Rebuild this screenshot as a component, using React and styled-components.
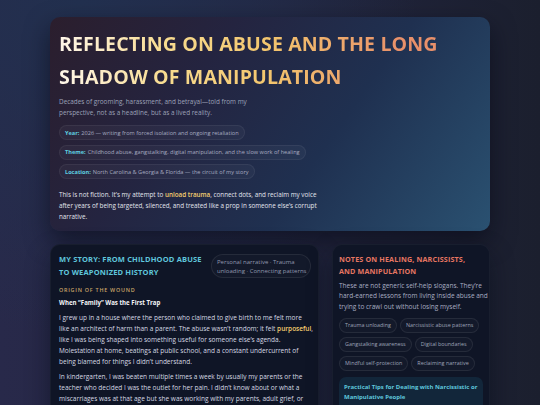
import React from "react";
import styled, { createGlobalStyle } from "styled-components";

const Global = createGlobalStyle`
  html, body { margin: 0; padding: 0; overflow: hidden; }
  body {
    width: 540px; height: 405px;
    font-family: "Open Sans", "Noto Sans", sans-serif;
    background:
      radial-gradient(circle at 15% 0%, #22304f 0%, rgba(34,48,79,0) 55%),
      linear-gradient(90deg, #28294a 0%, #232641 50%, #1b1f2e 100%);
    color: #e4e6ee;
  }
`;

const Page = styled.div`
  width: 440px;
  margin: 0 auto;
  padding-top: 17px;
  display: flex;
  flex-direction: column;
  gap: 13.5px;
`;

const Hero = styled.header`
  border-radius: 10px;
  padding: 11px 9px 8.5px;
  background: linear-gradient(125deg, #2b1e2d 0%, #242440 32%, #1f3050 62%, #2a5171 100%);
  box-shadow: 0 10px 24px rgba(5, 8, 18, 0.55);
`;

const Title = styled.h1`
  margin: 0;
  font-size: 19.6px;
  line-height: 32.5px;
  font-weight: 700;
  letter-spacing: 0.005em;
  white-space: nowrap;
  background: linear-gradient(90deg, #fff6ea 0%, #f8dc90 28%, #f3c66e 55%, #e8906a 90%);
  -webkit-background-clip: text;
  background-clip: text;
  color: transparent;
  width: max-content;
`;

const Lede = styled.p`
  margin: 3px 0 0;
  font-size: 6.4px;
  line-height: 11px;
  color: #9ca1b8;
  white-space: nowrap;
`;

const Chips = styled.div`
  display: flex;
  flex-direction: column;
  align-items: flex-start;
  gap: 4.5px;
  margin-top: 7px;
`;

const Chip = styled.div`
  height: 15px;
  box-sizing: border-box;
  display: flex;
  align-items: center;
  padding: 0 5px;
  border-radius: 999px;
  background: rgba(255, 255, 255, 0.035);
  border: 1px solid rgba(255, 255, 255, 0.06);
  font-size: 5.6px;
  color: #a7abc0;
  white-space: nowrap;
`;

const ChipKey = styled.b`
  color: #5fd0e0;
  font-weight: 700;
  margin-right: 2px;
`;

const Intro = styled.p`
  margin: 10px 0 0;
  font-size: 6.3px;
  line-height: 11px;
  color: #e2e4ec;
  white-space: nowrap;
`;

const Mark = styled.span`
  color: #f5cf6f;
  font-weight: 600;
`;

const Columns = styled.div`
  display: grid;
  grid-template-columns: 269px 158px;
  gap: 13px;
  align-items: start;
`;

const Card = styled.section`
  border-radius: 10px;
  background: #0f1526;
  border: 1px solid rgba(255, 255, 255, 0.04);
  padding: ${(p) => p.$pad || "8px"};
  min-height: 170px;
  box-shadow: 0 10px 24px rgba(5, 8, 18, 0.45);
`;

const CardHead = styled.div`
  display: flex;
  justify-content: space-between;
  align-items: flex-start;
`;

const StoryTitle = styled.h2`
  margin: -0.5px 0 0;
  font-size: 7.5px;
  line-height: 13px;
  font-weight: 700;
  letter-spacing: 0.02em;
  color: #5fc6dc;
  text-transform: uppercase;
  white-space: nowrap;
`;

const MetaPill = styled.div`
  box-sizing: border-box;
  width: 100px;
  height: 24px;
  padding: 3px 5px;
  border-radius: 12px;
  border: 1px solid rgba(255, 255, 255, 0.08);
  background: rgba(255, 255, 255, 0.02);
  font-size: 6px;
  line-height: 9px;
  color: #9298ae;
  white-space: nowrap;
  margin: 1px -1px 0 0;
`;

const Kicker = styled.div`
  margin-top: 7.5px;
  font-size: 5.4px;
  line-height: 9px;
  font-weight: 600;
  letter-spacing: 0.14em;
  color: #c9a466;
  text-transform: uppercase;
`;

const SubHead = styled.h3`
  margin: 2px 0 0;
  font-size: 6.1px;
  line-height: 11px;
  font-weight: 700;
  color: #f3f4f8;
`;

const Body = styled.p`
  margin: ${(p) => p.$mt || "3.5px"} 0 0;
  font-size: 6.5px;
  line-height: 11px;
  color: #d6d9e3;
  white-space: nowrap;
`;

const NotesTitle = styled.h2`
  margin: 0;
  font-size: 7.2px;
  line-height: 12px;
  font-weight: 700;
  letter-spacing: 0.02em;
  color: #e67662;
  text-transform: uppercase;
  white-space: nowrap;
`;

const NotesText = styled.p`
  margin: 4px 0 0;
  font-size: 6.5px;
  line-height: 10.3px;
  color: #a9aec2;
  white-space: nowrap;
`;

const Tags = styled.div`
  display: flex;
  flex-wrap: wrap;
  gap: 4px 3px;
  margin-top: 6px;
`;

const Tag = styled.span`
  box-sizing: border-box;
  height: 15px;
  display: inline-flex;
  align-items: center;
  padding: 0 5px;
  border-radius: 999px;
  border: 1px solid rgba(255, 255, 255, 0.08);
  background: rgba(255, 255, 255, 0.02);
  font-size: 5.4px;
  color: #9ea3b8;
  white-space: nowrap;
`;

const Tips = styled.div`
  margin-top: 6px;
  border-radius: 7px;
  background: #12263a;
  padding: 5px 5px 8px;
  min-height: 40px;
`;

const TipsTitle = styled.h4`
  margin: 0;
  font-size: 6px;
  line-height: 10px;
  font-weight: 700;
  color: #5fc6dc;
  white-space: nowrap;
`;

export default function App() {
  return (
    <>
      <Global />
      <Page>
        <Hero>
          <Title>
            REFLECTING ON ABUSE AND THE LONG
            <br />
            SHADOW OF MANIPULATION
          </Title>
          <Lede>
            Decades of grooming, harassment, and betrayal—told from my
            <br />
            perspective, not as a headline, but as a lived reality.
          </Lede>
          <Chips>
            <Chip>
              <ChipKey>Year:</ChipKey> 2026 — writing from forced isolation and ongoing retaliation
            </Chip>
            <Chip>
              <ChipKey>Theme:</ChipKey> Childhood abuse, gangstalking, digital manipulation, and the
              slow work of healing
            </Chip>
            <Chip>
              <ChipKey>Location:</ChipKey> North Carolina &amp; Georgia &amp; Florida — the circuit of
              my story
            </Chip>
          </Chips>
          <Intro>
            This is not fiction. It’s my attempt to <Mark>unload trauma</Mark>, connect dots, and
            reclaim my voice
            <br />
            after years of being targeted, silenced, and treated like a prop in someone else’s
            corrupt
            <br />
            narrative.
          </Intro>
        </Hero>
        <Columns>
          <Card>
            <CardHead>
              <StoryTitle>
                My Story: From Childhood Abuse
                <br />
                to Weaponized History
              </StoryTitle>
              <MetaPill>
                Personal narrative · Trauma
                <br />
                unloading · Connecting patterns
              </MetaPill>
            </CardHead>
            <Kicker>Origin of the Wound</Kicker>
            <SubHead>When “Family” Was the First Trap</SubHead>
            <Body>
              I grew up in a house where the person who claimed to give birth to me felt more
              <br />
              like an architect of harm than a parent. The abuse wasn’t random; it felt{" "}
              <Mark>purposeful</Mark>,
              <br />
              like I was being shaped into something useful for someone else’s agenda.
              <br />
              Molestation at home, beatings at public school, and a constant undercurrent of
              <br />
              being blamed for things I didn’t understand.
            </Body>
            <Body $mt="4px">
              In kindergarten, I was beaten multiple times a week by usually my parents or the
              <br />
              teacher who decided I was the outlet for her pain. I didn’t know about or what a
              <br />
              miscarriages was at that age but she was working with my parents, adult grief, or
              <br />
              something worse.
            </Body>
          </Card>
          <Card $pad="8px 6px">
            <NotesTitle>
              Notes on Healing, Narcissists,
              <br />
              and Manipulation
            </NotesTitle>
            <NotesText>
              These are not generic self-help slogans. They’re
              <br />
              hard-earned lessons from living inside abuse and
              <br />
              trying to crawl out without losing myself.
            </NotesText>
            <Tags>
              <Tag>Trauma unloading</Tag>
              <Tag>Narcissistic abuse patterns</Tag>
              <Tag>Gangstalking awareness</Tag>
              <Tag>Digital boundaries</Tag>
              <Tag>Mindful self-protection</Tag>
              <Tag>Reclaiming narrative</Tag>
            </Tags>
            <Tips>
              <TipsTitle>
                Practical Tips for Dealing with Narcissistic or
                <br />
                Manipulative People
              </TipsTitle>
            </Tips>
          </Card>
        </Columns>
      </Page>
    </>
  );
}
